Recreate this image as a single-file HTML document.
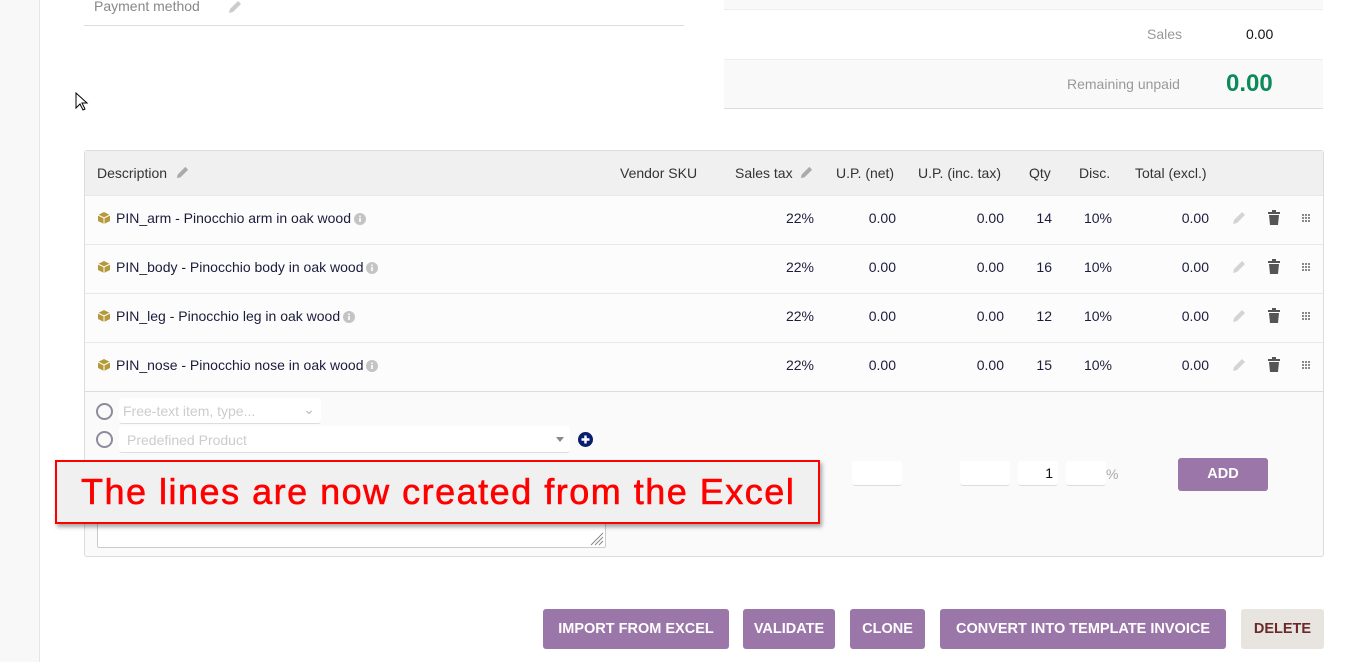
<!DOCTYPE html>
<html><head><meta charset="utf-8">
<style>
*{box-sizing:border-box;margin:0;padding:0}
body{width:1357px;height:662px;overflow:hidden;background:#fff;font-family:"Liberation Sans",Arial,Helvetica,sans-serif;font-size:14px;color:#333;position:relative}
.a{position:absolute}
.side{left:0;top:0;width:40px;height:662px;background:#f8f8f8;border-right:1px solid #e6e6e6}
.hd{color:#333;font-size:14px;top:165px}
.row{left:85px;width:1238px;height:49px;border-top:1px solid #e8e8e8;background:#fcfcfc}
.desc{left:116px;color:#1c1c3c;font-size:14px}
.num{color:#1c1c3c;text-align:right;font-size:14px}
.btn{top:609px;height:40px;background:#9b76a8;color:#fff;font-weight:bold;font-size:14.5px;border-radius:3px;text-align:center;line-height:40px;white-space:nowrap}
.inp{background:#fff;border-radius:3px;border-bottom:1px solid #ddd}
</style></head><body>
<div class="a side"></div>

<div class="a" style="left:94px;top:-2px;color:#888;font-size:14px">Payment method</div>
<svg class="a" style="left:226px;top:0" width="16" height="16" viewBox="0 0 16 16"><path d="M3 13l1-4 8-8 3 3-8 8z" fill="#ccc"/></svg>
<div class="a" style="left:84px;top:25px;width:600px;height:1px;background:#ddd"></div>

<div class="a" style="left:724px;top:0;width:599px;height:10px;background:#f9f9f9;border-bottom:1px solid #eee"></div>
<div class="a" style="left:1147px;top:26px;color:#999;font-size:14px">Sales</div>
<div class="a" style="left:1246px;top:26px;color:#111;font-size:14px">0.00</div>
<div class="a" style="left:724px;top:59px;width:599px;height:50px;background:#f9f9f9;border-top:1px solid #eee;border-bottom:1px solid #ddd"></div>
<div class="a" style="left:1067px;top:76px;color:#999;font-size:14px">Remaining unpaid</div>
<div class="a" style="left:1226px;top:70px;color:#0b8a5a;font-size:24px;font-weight:bold">0.00</div>

<svg class="a" style="left:75px;top:92px" width="14" height="20" viewBox="0 0 14 20"><path d="M1 1v15l4-4 3 6 2-1-3-6h5z" fill="#fff" stroke="#000" stroke-width="1"/></svg>

<div class="a" style="left:84px;top:150px;width:1240px;height:407px;border:1px solid #ddd;border-radius:3px;background:#fafafa"></div>
<div class="a" style="left:85px;top:151px;width:1238px;height:44px;background:#f0f0f0"></div>
<div class="a hd" style="left:97px">Description</div>
<svg class="a" style="left:175px;top:165px" width="15" height="15" viewBox="0 0 16 16"><path d="M2 14l1-4 8-8 3 3-8 8z" fill="#aaa"/></svg>
<div class="a hd" style="left:620px">Vendor SKU</div>
<div class="a hd" style="left:735px">Sales tax</div>
<svg class="a" style="left:799px;top:165px" width="15" height="15" viewBox="0 0 16 16"><path d="M2 14l1-4 8-8 3 3-8 8z" fill="#aaa"/></svg>
<div class="a hd" style="left:836px">U.P. (net)</div>
<div class="a hd" style="left:918px">U.P. (inc. tax)</div>
<div class="a hd" style="left:1029px">Qty</div>
<div class="a hd" style="left:1079px">Disc.</div>
<div class="a hd" style="left:1135px">Total (excl.)</div>

<div class="a row" style="top:195px"></div>
<div class="a row" style="top:244px"></div>
<div class="a row" style="top:293px"></div>
<div class="a row" style="top:342px"></div>
<div class="a" style="left:85px;top:391px;width:1238px;height:1px;background:#ddd"></div>

<div id="rows"></div>
<script>
var d=[["PIN_arm - Pinocchio arm in oak wood","14"],["PIN_body - Pinocchio body in oak wood","16"],["PIN_leg - Pinocchio leg in oak wood","12"],["PIN_nose - Pinocchio nose in oak wood","15"]];
var h="";
d.forEach(function(r,i){var y=210+i*49;
h+='<svg class="a" style="left:97px;top:'+(y+1)+'px" width="14" height="14" viewBox="0 0 14 14"><path d="M7 1l6 3v6l-6 3-6-3V4z" fill="#b59a3c"/><path d="M1 4l6 3 6-3M7 7v6" stroke="#fff" stroke-width="1" fill="none"/></svg>';
h+='<div class="a desc" style="top:'+(y)+'px"><span>'+r[0]+'</span><svg style="vertical-align:-2px;margin-left:3px" width="12" height="12" viewBox="0 0 12 12"><circle cx="6" cy="6" r="6" fill="#c4c4c4"/><rect x="5.2" y="5" width="1.6" height="4" fill="#fff"/><rect x="5.2" y="2.6" width="1.6" height="1.5" fill="#fff"/></svg></div>';
function n(x,t){return '<div class="a num" style="left:'+(x-80)+'px;width:80px;top:'+y+'px">'+t+'</div>';}
h+=n(814,"22%")+n(896,"0.00")+n(1004,"0.00")+n(1052,r[1])+n(1112,"10%")+n(1209,"0.00");
h+='<svg class="a" style="left:1231px;top:'+(y)+'px" width="16" height="16" viewBox="0 0 16 16"><path d="M2 14l1-4 8-8 3 3-8 8z" fill="#d4d4d4"/></svg>';
h+='<svg class="a" style="left:1267px;top:'+(y)+'px" width="14" height="16" viewBox="0 0 14 16"><rect x="1" y="2" width="12" height="2" fill="#555"/><rect x="5" y="0" width="4" height="2" fill="#555"/><path d="M2 5h10l-1 10H3z" fill="#555"/></svg>';
h+='<svg class="a" style="left:1302px;top:'+(y+4)+'px" width="9" height="9" viewBox="0 0 9 9" fill="#888"><rect x="0" y="0" width="2" height="2"/><rect x="3" y="0" width="2" height="2"/><rect x="6" y="0" width="2" height="2"/><rect x="0" y="3" width="2" height="2"/><rect x="3" y="3" width="2" height="2"/><rect x="6" y="3" width="2" height="2"/><rect x="0" y="6" width="2" height="2"/><rect x="3" y="6" width="2" height="2"/><rect x="6" y="6" width="2" height="2"/></svg>';
});
document.getElementById("rows").innerHTML=h;
</script>

<div class="a" style="left:96px;top:403px;width:17px;height:17px;border:2px solid #8c8c9c;border-radius:50%"></div>
<div class="a inp" style="left:119px;top:398px;width:202px;height:26px;color:#ccc;padding:5px 4px">Free-text item, type...<span style="position:absolute;right:6px;top:3px;color:#bbb">&#8964;</span></div>
<div class="a" style="left:96px;top:431px;width:17px;height:17px;border:2px solid #8c8c9c;border-radius:50%"></div>
<div class="a inp" style="left:119px;top:426px;width:451px;height:27px;color:#ccc;padding:6px 8px">Predefined Product<span style="position:absolute;right:6px;top:11px;width:0;height:0;border-left:4px solid transparent;border-right:4px solid transparent;border-top:5px solid #888"></span></div>
<svg class="a" style="left:578px;top:432px" width="15" height="15" viewBox="0 0 15 15"><circle cx="7.5" cy="7.5" r="7.5" fill="#0a1e6e"/><path d="M7.5 3.5v8M3.5 7.5h8" stroke="#fff" stroke-width="2.4"/></svg>
<div class="a" style="left:97px;top:515px;width:509px;height:33px;border:1px solid #ccc;border-radius:2px;background:#fff"></div>
<svg class="a" style="left:590px;top:532px" width="14" height="14" viewBox="0 0 14 14" stroke="#888"><path d="M13 1L1 13M13 5L5 13M13 9L9 13"/></svg>

<div class="a inp" style="left:852px;top:461px;width:50px;height:25px"></div>
<div class="a inp" style="left:960px;top:461px;width:50px;height:25px"></div>
<div class="a inp" style="left:1018px;top:461px;width:40px;height:25px;text-align:right;padding:4px 5px;color:#111">1</div>
<div class="a inp" style="left:1066px;top:461px;width:40px;height:25px"></div>
<div class="a" style="left:1106px;top:466px;color:#aaa">%</div>
<div class="a btn" style="left:1178px;top:458px;width:90px;height:33px;line-height:33px">ADD</div>

<div class="a" style="left:55px;top:460px;width:765px;height:64px;background:#f0f0f0;border:2px solid #f00;box-shadow:2px 3px 4px rgba(0,0,0,.35);color:#f00;font-size:36px;line-height:60px;padding-left:24px;letter-spacing:1.5px;white-space:nowrap;-webkit-text-stroke:0.6px #f00">The lines are now created from the Excel</div>

<div class="a btn" style="left:543px;width:186px">IMPORT FROM EXCEL</div>
<div class="a btn" style="left:743px;width:92px">VALIDATE</div>
<div class="a btn" style="left:850px;width:75px">CLONE</div>
<div class="a btn" style="left:940px;width:286px">CONVERT INTO TEMPLATE INVOICE</div>
<div class="a btn" style="left:1241px;width:83px;background:#e8e4e0;color:#6b2a2a">DELETE</div>
</body></html>
